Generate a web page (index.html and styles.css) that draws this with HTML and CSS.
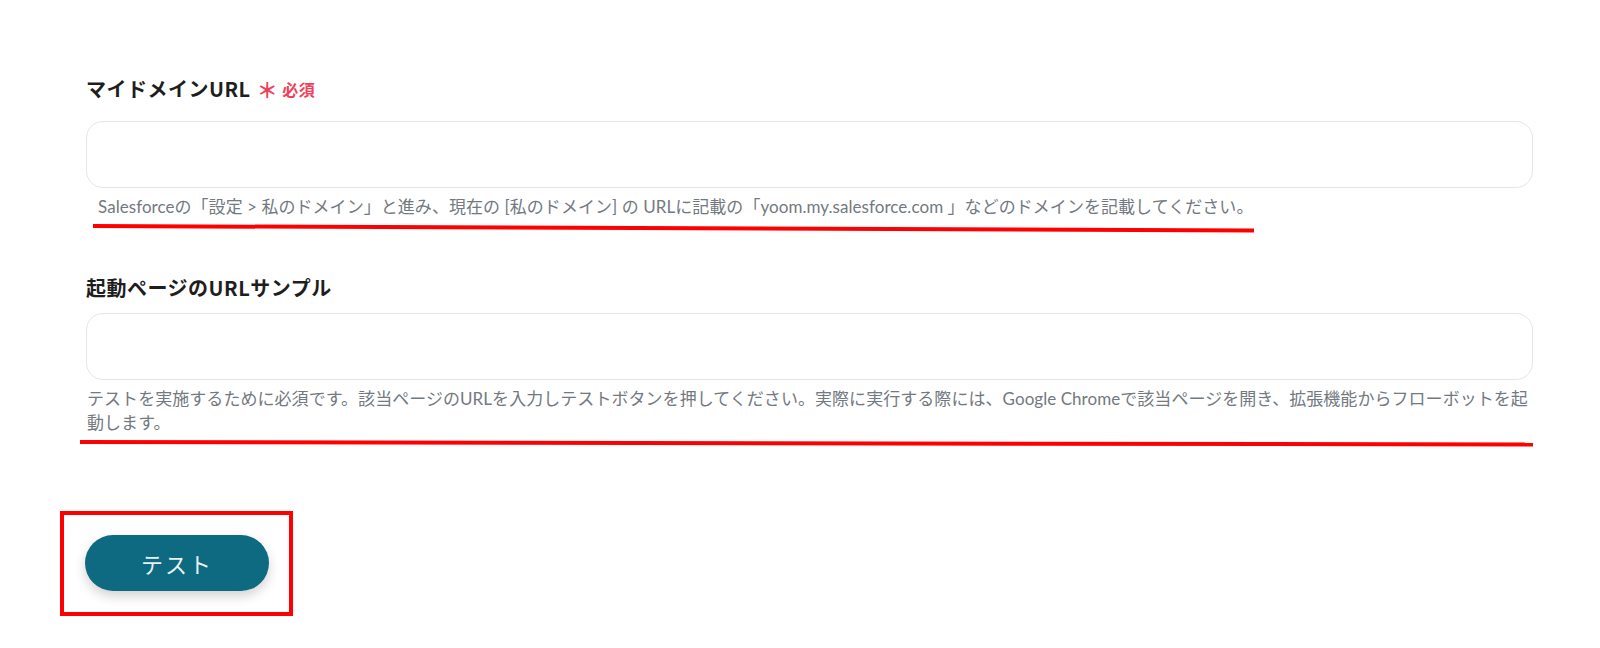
FILE: index.html
```html
<!DOCTYPE html>
<html lang="ja">
<head>
<meta charset="utf-8">
<title>フォーム</title>
<link rel="stylesheet" href="styles.css">
</head>
<body>
<main class="form">
  <section class="field field-domain">
    <div class="label">マイドメインURL<span class="req"><span class="ast">＊</span>必須</span></div>
    <div class="input"></div>
    <p class="help">Salesforceの「設定 &gt; 私のドメイン」と進み、現在の [私のドメイン] の URLに記載の「yoom.my.salesforce.com 」などのドメインを記載してください。</p>
    <div class="mark mark-1"></div>
  </section>
  <section class="field field-sample">
    <div class="label">起動ページのURLサンプル</div>
    <div class="input"></div>
    <p class="help">テストを実施するために必須です。該当ページのURLを入力しテストボタンを押してください。実際に実行する際には、Google Chromeで該当ページを開き、拡張機能からフローボットを起動します。</p>
    <div class="mark mark-2"></div>
  </section>
  <div class="btn-frame"><button class="btn" type="button">テスト</button></div>
</main>
</body>
</html>
```

FILE: styles.css
```css
* { box-sizing: border-box; }
html, body { margin: 0; padding: 0; background: #ffffff; }
body {
  font-family: "Noto Sans CJK JP", "Noto Sans", sans-serif;
  color: #222222;
}
.form {
  width: 1447px;
  margin-left: 86px;
  padding-top: 75px;
}
.field { display: flex; flex-direction: column; }
.label {
  font-size: 20px;
  line-height: 28px;
  font-weight: 700;
  letter-spacing: 0.5px;
  color: #1e1e1e;
  display: flex;
  align-items: center;
}
.req {
  display: inline-flex;
  align-items: center;
  color: #f0405b;
  font-size: 16px;
  margin-left: 6px;
  letter-spacing: 0.5px;
}
.ast { font-size: 21px; margin-right: 4px; }
.input {
  height: 67px;
  border: 1.5px solid #e3e6ea;
  border-radius: 17px;
  background: #fff;
}
.field-domain .input { margin-top: 18px; }
.field-sample { margin-top: 46px; }
.field-sample .input { margin-top: 11px; }
.help {
  margin: 7px 0 0 0;
  font-family: "Lato", "Noto Sans CJK JP", sans-serif;
  font-size: 17px;
  line-height: 24px;
  letter-spacing: 0.05px;
  color: #737980;
}
.field-domain .help { padding-left: 12px; }
.field-sample .help { padding-left: 1px; margin-right: -4px; }
.mark { height: 4px; background: #ff0000; }
.mark-1 {
  margin-top: 5px;
  margin-left: 7px;
  width: 1161px;
  transform: rotate(0.22deg);
  transform-origin: left center;
}
.mark-2 {
  margin-top: 5px;
  margin-left: -6px;
  width: 1453px;
  transform: rotate(0.1deg);
  transform-origin: left center;
}
.btn-frame {
  margin-top: 67px;
  margin-left: -26px;
  width: 233px;
  border: 4px solid #ff0000;
  padding: 20px 20px 21px 21px;
}
.btn {
  display: block;
  width: 184px;
  height: 56px;
  border: none;
  border-radius: 28px;
  background: #0d6a80;
  color: #e9f0f2;
  font-family: "Noto Sans CJK JP", "Noto Sans", sans-serif;
  font-size: 22px;
  letter-spacing: 2px;
  box-shadow: 0 5px 12px rgba(0, 0, 0, 0.18);
  padding: 0;
}
```
